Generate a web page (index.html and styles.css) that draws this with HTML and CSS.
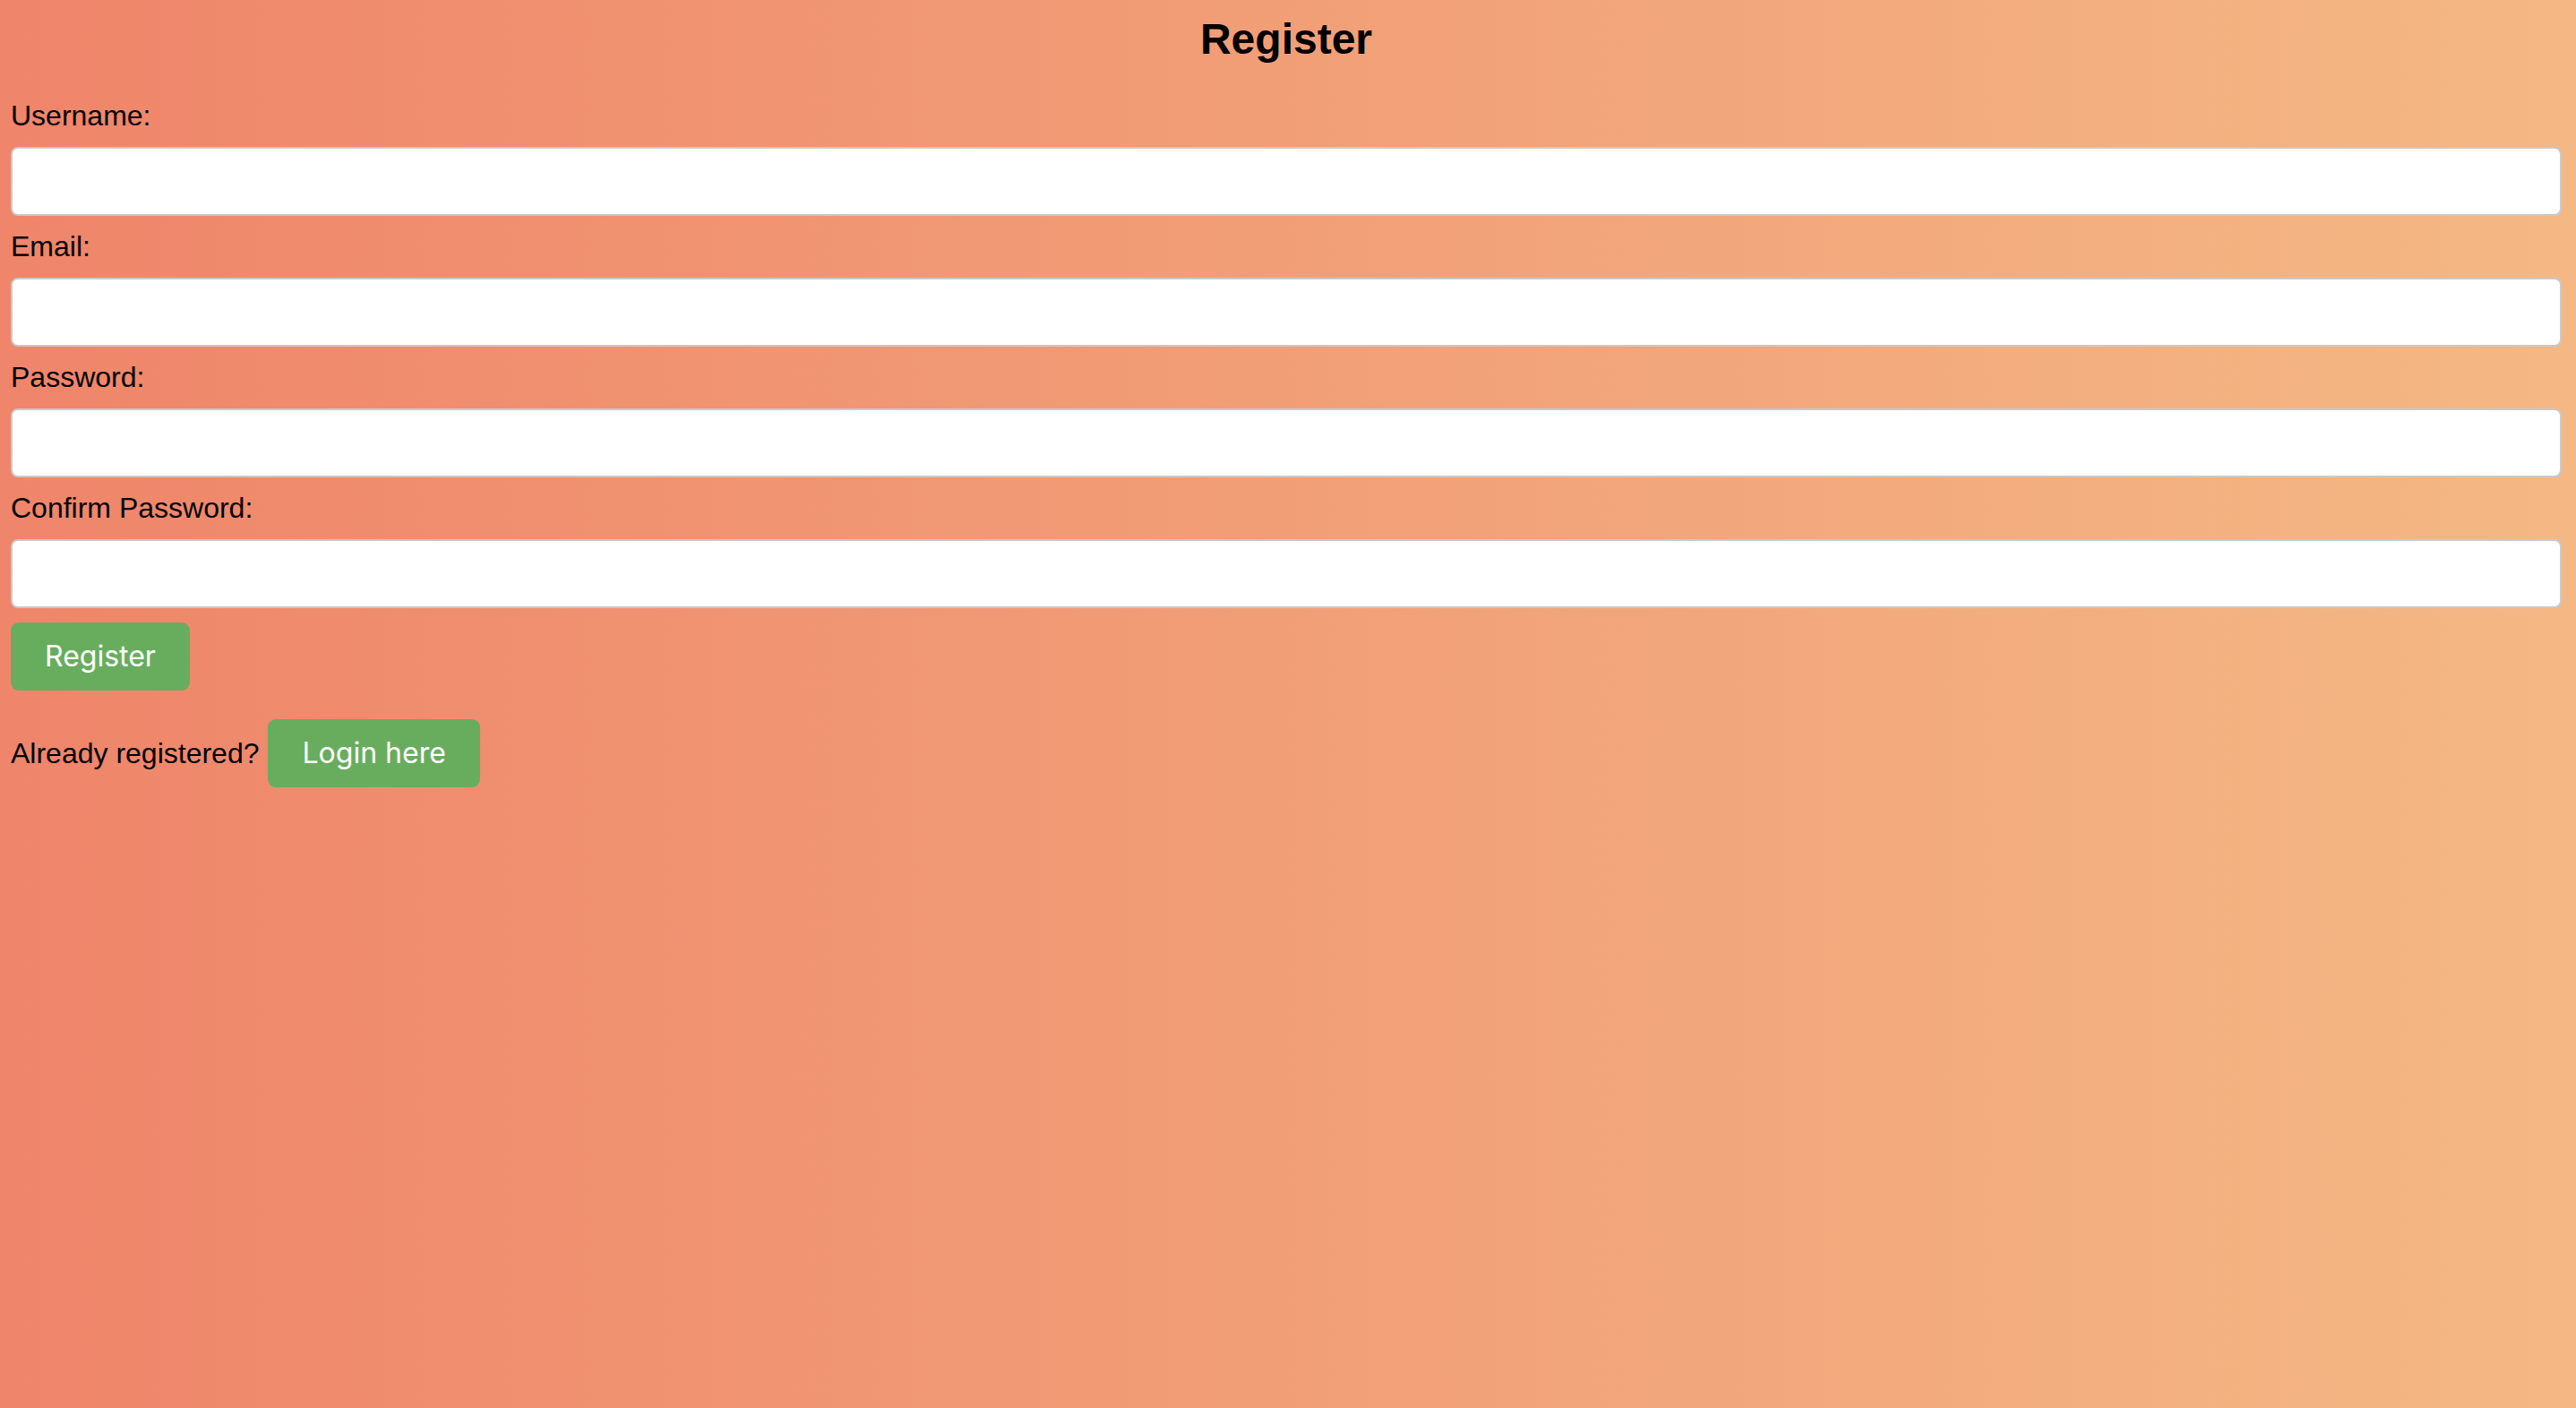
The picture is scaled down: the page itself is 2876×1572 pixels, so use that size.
FILE: index.html
```html
<!DOCTYPE html>
<html lang="en">
<head>
<meta charset="utf-8">
<title>Register</title>
<link rel="stylesheet" href="styles.css">
</head>
<body>
<main class="page">
  <h2 class="title">Register</h2>
  <form class="form">
    <div class="field">
      <label for="username">Username:</label>
      <input id="username" type="text">
    </div>
    <div class="field">
      <label for="email">Email:</label>
      <input id="email" type="email">
    </div>
    <div class="field">
      <label for="password">Password:</label>
      <input id="password" type="password">
    </div>
    <div class="field">
      <label for="confirm">Confirm Password:</label>
      <input id="confirm" type="password">
    </div>
    <button type="button" class="btn">Register</button>
  </form>
  <div class="login-row">
    <span class="login-text">Already registered?</span>
    <button type="button" class="btn">Login here</button>
  </div>
</main>
</body>
</html>
```

FILE: styles.css
```css
html, body {
  margin: 0;
  padding: 0;
}

body {
  min-height: 100vh;
  background: linear-gradient(to right, #ef856a, #f4b884);
  font-family: "Liberation Sans", Arial, sans-serif;
  color: #000;
}

.page {
  padding: 16px 16px 0 12px;
}

.title {
  margin: 0 0 40px;
  font-size: 48px;
  line-height: 55px;
  font-weight: bold;
  text-align: center;
}

.form {
  display: flex;
  flex-direction: column;
  align-items: flex-start;
}

.field {
  width: 100%;
}

.field label {
  display: block;
  font-size: 32px;
  line-height: 37px;
}

.field input {
  display: block;
  box-sizing: border-box;
  width: 100%;
  height: 77px;
  margin: 16px 0;
  border: 2px solid #c9c9c9;
  border-radius: 8px;
  background: #fff;
  font-size: 30px;
  padding: 0 14px;
  outline: none;
}

.btn {
  box-sizing: border-box;
  height: 76px;
  padding: 0 38px;
  border: none;
  border-radius: 9px;
  background: #68ad5e;
  color: #fff;
  font-family: Inter, "Noto Sans", sans-serif;
  font-size: 32px;
  line-height: 36px;
  cursor: pointer;
}

.login-row {
  display: flex;
  align-items: center;
  gap: 10px;
  margin-top: 32px;
}

.login-text {
  font-size: 32px;
  line-height: 37px;
}
```
